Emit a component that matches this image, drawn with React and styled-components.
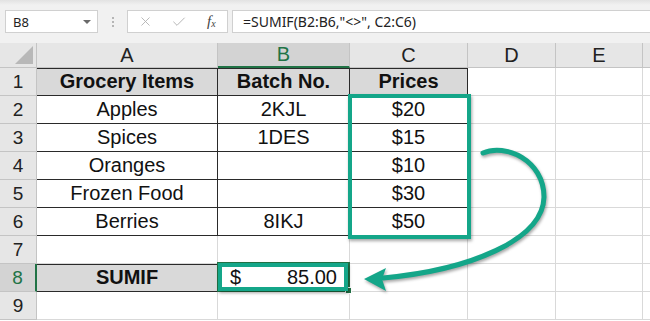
import styled, { createGlobalStyle } from "styled-components";
import { X, Check } from "lucide-react";

const GlobalStyle = createGlobalStyle`
  html, body {
    margin: 0;
    padding: 0;
    background: #ffffff;
  }
  body {
    font-family: "Liberation Sans", Arial, sans-serif;
    overflow: hidden;
  }
`;

const TEAL = "#14a689";
const GREEN = "#217346";

const COLS = [37, 181, 132, 118, 88, 87, 20];
// the F column is cut by the window edge, so its letter is not shown
const LETTERS = ["A", "B", "C", "D", "E", ""];

const rows = [
  { n: 1, cells: ["Grocery Items", "Batch No.", "Prices"], head: true },
  { n: 2, cells: ["Apples", "2KJL", "$20"] },
  { n: 3, cells: ["Spices", "1DES", "$15"] },
  { n: 4, cells: ["Oranges", "", "$10"] },
  { n: 5, cells: ["Frozen Food", "", "$30"] },
  { n: 6, cells: ["Berries", "8IKJ", "$50"] },
  { n: 7, cells: ["", "", ""] },
  { n: 8, cells: [], sum: true },
  { n: 9, cells: ["", "", ""] },
];

const Page = styled.div`
  position: relative;
  width: 650px;
  height: 321px;
  overflow: hidden;
`;

const Toolbar = styled.div`
  display: flex;
  align-items: center;
  height: 43px;
  padding-left: 5px;
  background: linear-gradient(#e2e2e2 0px, #f1f1f1 5px, #f1f1f1 100%);
  box-sizing: border-box;
`;

const NameBox = styled.div`
  display: flex;
  align-items: center;
  justify-content: space-between;
  width: 93px;
  height: 23px;
  box-sizing: border-box;
  padding: 0 6px 0 7px;
  background: #fff;
  border: 1px solid #d0d0d0;
  font-family: "Noto Sans", sans-serif;
  font-size: 13px;
  color: #222;
`;

const Caret = styled.span`
  width: 0;
  height: 0;
  border-left: 4px solid transparent;
  border-right: 4px solid transparent;
  border-top: 4px solid #6a6a6a;
`;

const Dots = styled.div`
  display: flex;
  flex-direction: column;
  gap: 2px;
  margin: 0 13px 0 14px;
  span {
    width: 2px;
    height: 2px;
    background: #b5b5b5;
  }
`;

const ToolBox = styled.div`
  display: flex;
  align-items: center;
  width: 101px;
  height: 23px;
  box-sizing: border-box;
  padding-left: 10px;
  gap: 18px;
  background: #fff;
  border: 1px solid #d0d0d0;
  color: #b0b0b0;
`;

const Fx = styled.span`
  font-family: "Liberation Serif", serif;
  font-style: italic;
  font-size: 15px;
  color: #444;
  margin-left: 2px;
  sub {
    font-size: 10px;
    vertical-align: -1px;
  }
`;

const FormulaBox = styled.div`
  flex: 1;
  height: 23px;
  margin-left: 4px;
  box-sizing: border-box;
  padding-left: 10px;
  display: flex;
  align-items: center;
  background: #fff;
  border: 1px solid #d0d0d0;
  border-right: none;
  font-family: "Noto Sans", sans-serif;
  font-size: 14px;
  color: #222;
`;

const Sheet = styled.div`
  display: grid;
  grid-template-columns: ${COLS.map((c) => c + "px").join(" ")};
  grid-template-rows: 25px repeat(9, 28px);
`;

const Corner = styled.div`
  position: relative;
  background: #e6e6e6;
  border-right: 1px solid #c4c4c4;
  border-bottom: 1px solid #c4c4c4;
  box-sizing: border-box;
  svg {
    position: absolute;
    right: 3px;
    bottom: 3px;
  }
`;

const ColHead = styled.div`
  display: flex;
  align-items: center;
  justify-content: center;
  box-sizing: border-box;
  font-size: 20px;
  color: ${({ $active }) => ($active ? GREEN : "#222")};
  background: ${({ $active }) => ($active ? "#d3d3d3" : "#e6e6e6")};
  border-right: 1px solid #c4c4c4;
  border-bottom: ${({ $active }) =>
    $active ? `2px solid ${GREEN}` : "1px solid #c4c4c4"};
`;

const RowHead = styled.div`
  display: flex;
  align-items: center;
  justify-content: center;
  box-sizing: border-box;
  font-size: 19px;
  color: ${({ $active }) => ($active ? GREEN : "#222")};
  background: ${({ $active }) => ($active ? "#d3d3d3" : "#e6e6e6")};
  border-bottom: 1px solid #c4c4c4;
  border-right: ${({ $active }) =>
    $active ? `2px solid ${GREEN}` : "1px solid #c4c4c4"};
`;

const Cell = styled.div`
  display: flex;
  align-items: center;
  justify-content: ${({ $spread }) => ($spread ? "space-between" : "center")};
  padding: ${({ $spread }) => ($spread ? "0 12px 0 12px" : "0")};
  box-sizing: border-box;
  font-size: 20px;
  font-weight: ${({ $bold }) => ($bold ? 700 : 400)};
  color: #111;
  white-space: nowrap;
  background: ${({ $fill }) => ($fill ? "#d9d9d9" : "#fff")};
  border-right: 1px solid ${({ $dark }) => ($dark ? "#2a2a2a" : "#d9d9d9")};
  border-bottom: 1px solid ${({ $dark }) => ($dark ? "#2a2a2a" : "#d9d9d9")};
  box-shadow: ${({ $top }) => ($top ? "inset 0 1px 0 #2a2a2a" : "none")};
`;

const TealBox = styled.div`
  position: absolute;
  box-sizing: border-box;
  border: 4px solid ${TEAL};
  box-shadow: 1px 2px 3px rgba(0, 0, 0, 0.35);
`;

const Selection = styled.div`
  position: absolute;
  left: 217px;
  top: 262px;
  width: 133px;
  height: 30px;
  box-sizing: border-box;
  border: 2px solid ${GREEN};
  &::after {
    content: "";
    position: absolute;
    right: -4px;
    bottom: -4px;
    width: 5px;
    height: 5px;
    background: ${GREEN};
    border: 1px solid #fff;
  }
`;

const Arrow = styled.svg`
  position: absolute;
  left: 0;
  top: 0;
  pointer-events: none;
  filter: drop-shadow(1px 2px 1.5px rgba(0, 0, 0, 0.35));
`;

export default function App() {
  return (
    <Page>
      <GlobalStyle />
      <Toolbar>
        <NameBox>
          B8
          <Caret />
        </NameBox>
        <Dots>
          <span />
          <span />
          <span />
        </Dots>
        <ToolBox>
          <X size={15} strokeWidth={1.4} />
          <Check size={16} strokeWidth={1.4} />
          <Fx>
            f<sub>x</sub>
          </Fx>
        </ToolBox>
        <FormulaBox>=SUMIF(B2:B6,"&lt;&gt;", C2:C6)</FormulaBox>
      </Toolbar>

      <Sheet>
        <Corner>
          <svg width="18" height="18" viewBox="0 0 18 18">
            <polygon points="18,0 18,18 0,18" fill="#b8b8b8" />
          </svg>
        </Corner>
        {LETTERS.map((l, i) => (
          <ColHead key={i} $active={l === "B"}>
            {l}
          </ColHead>
        ))}

        {rows.map((r) => (
          <Row key={r.n} row={r} />
        ))}
      </Sheet>

      <TealBox style={{ left: 348, top: 94, width: 123, height: 145 }} />
      <Selection />
      <TealBox style={{ left: 218, top: 263, width: 130, height: 28 }} />

      <Arrow width="650" height="321" viewBox="0 0 650 321">
        <path
          d="M483 153 C505 143 544 160 544 197 C543 240 470 270 383 278"
          fill="none"
          stroke={TEAL}
          strokeWidth="5"
          strokeLinecap="round"
        />
        <polygon points="364,279 386,268 382,279 386,291" fill={TEAL} />
      </Arrow>
    </Page>
  );
}

function Row({ row }) {
  const inTable = row.n <= 6;
  if (row.sum) {
    return (
      <>
        <RowHead $active>{row.n}</RowHead>
        <Cell $fill $bold $dark $top>
          SUMIF
        </Cell>
        <Cell $spread>
          <span>$</span>
          <span>85.00</span>
        </Cell>
        <Cell />
        <Cell />
        <Cell />
        <Cell />
      </>
    );
  }
  return (
    <>
      <RowHead>{row.n}</RowHead>
      {row.cells.map((c, i) => (
        <Cell
          key={i}
          $dark={inTable}
          $top={row.n === 1}
          $bold={row.head}
          $fill={row.head}
        >
          {c}
        </Cell>
      ))}
      <Cell />
      <Cell />
      <Cell />
    </>
  );
}
